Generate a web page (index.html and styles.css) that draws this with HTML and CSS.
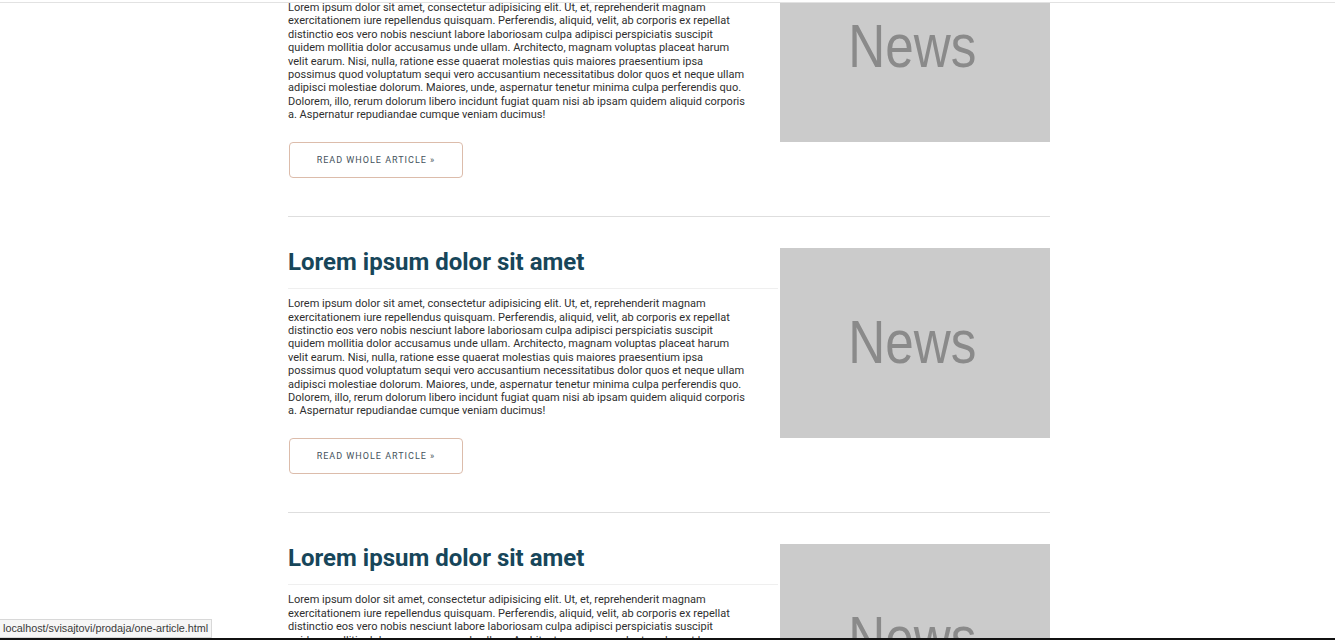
FILE: index.html
```html
<!DOCTYPE html>
<html lang="en">
<head>
<meta charset="utf-8">
<title>News</title>
<link rel="stylesheet" href="styles.css">
</head>
<body>
<div class="top-line"></div>
<main class="news-list">
  <article class="article first">
    <div class="article-body">
      <h2 class="article-title">Lorem ipsum dolor sit amet</h2>
      <p class="article-text">Lorem ipsum dolor sit amet, consectetur adipisicing elit. Ut, et, reprehenderit magnam exercitationem iure repellendus quisquam. Perferendis, aliquid, velit, ab corporis ex repellat distinctio eos vero nobis nesciunt labore laboriosam culpa adipisci perspiciatis suscipit quidem mollitia dolor accusamus unde ullam. Architecto, magnam voluptas placeat harum velit earum. Nisi, nulla, ratione esse quaerat molestias quis maiores praesentium ipsa possimus quod voluptatum sequi vero accusantium necessitatibus dolor quos et neque ullam adipisci molestiae dolorum. Maiores, unde, aspernatur tenetur minima culpa perferendis quo. Dolorem, illo, rerum dolorum libero incidunt fugiat quam nisi ab ipsam quidem aliquid corporis a. Aspernatur repudiandae cumque veniam ducimus!</p>
      <a class="read-more" href="one-article.html">Read whole article »</a>
    </div>
    <div class="article-image"><span>News</span></div>
  </article>
  <article class="article">
    <div class="article-body">
      <h2 class="article-title">Lorem ipsum dolor sit amet</h2>
      <p class="article-text">Lorem ipsum dolor sit amet, consectetur adipisicing elit. Ut, et, reprehenderit magnam exercitationem iure repellendus quisquam. Perferendis, aliquid, velit, ab corporis ex repellat distinctio eos vero nobis nesciunt labore laboriosam culpa adipisci perspiciatis suscipit quidem mollitia dolor accusamus unde ullam. Architecto, magnam voluptas placeat harum velit earum. Nisi, nulla, ratione esse quaerat molestias quis maiores praesentium ipsa possimus quod voluptatum sequi vero accusantium necessitatibus dolor quos et neque ullam adipisci molestiae dolorum. Maiores, unde, aspernatur tenetur minima culpa perferendis quo. Dolorem, illo, rerum dolorum libero incidunt fugiat quam nisi ab ipsam quidem aliquid corporis a. Aspernatur repudiandae cumque veniam ducimus!</p>
      <a class="read-more" href="one-article.html">Read whole article »</a>
    </div>
    <div class="article-image"><span>News</span></div>
  </article>
  <article class="article">
    <div class="article-body">
      <h2 class="article-title">Lorem ipsum dolor sit amet</h2>
      <p class="article-text">Lorem ipsum dolor sit amet, consectetur adipisicing elit. Ut, et, reprehenderit magnam exercitationem iure repellendus quisquam. Perferendis, aliquid, velit, ab corporis ex repellat distinctio eos vero nobis nesciunt labore laboriosam culpa adipisci perspiciatis suscipit quidem mollitia dolor accusamus unde ullam. Architecto, magnam voluptas placeat harum velit earum. Nisi, nulla, ratione esse quaerat molestias quis maiores praesentium ipsa possimus quod voluptatum sequi vero accusantium necessitatibus dolor quos et neque ullam adipisci molestiae dolorum. Maiores, unde, aspernatur tenetur minima culpa perferendis quo. Dolorem, illo, rerum dolorum libero incidunt fugiat quam nisi ab ipsam quidem aliquid corporis a. Aspernatur repudiandae cumque veniam ducimus!</p>
      <a class="read-more" href="one-article.html">Read whole article »</a>
    </div>
    <div class="article-image"><span>News</span></div>
  </article>
</main>
<div class="status-url">localhost/svisajtovi/prodaja/one-article.html</div>
<div class="bottom-edge"></div>
</body>
</html>
```

FILE: styles.css
```css
html, body {
  margin: 0;
  padding: 0;
  background: #ffffff;
  overflow: hidden;
  height: 640px;
}

body {
  font-family: Roboto, "Liberation Sans", Arial, sans-serif;
  color: #333333;
}

.top-line {
  position: fixed;
  top: 0;
  left: 0;
  right: 0;
  height: 2px;
  border-bottom: 1px solid #e2e2e2;
  background: #ffffff;
  z-index: 5;
}

.news-list {
  width: 762px;
  margin-left: 288px;
}

.article {
  display: grid;
  grid-template-columns: 1fr 270px;
  column-gap: 2px;
  padding: 31px 0 38px;
  border-bottom: 1px solid #dedede;
}

.article.first {
  margin-top: -79px;
}

.article-body {
  min-width: 0;
}

.article-title {
  margin: 0;
  padding: 0 0 12px;
  font-size: 24px;
  line-height: 28px;
  font-weight: 700;
  color: #17465a;
  border-bottom: 1px solid #efefef;
}

.article-text {
  margin: 8px 0 0;
  padding-right: 28px;
  font-size: 11px;
  line-height: 13.4px;
  color: #2f2f2f;
}

.read-more {
  display: inline-block;
  box-sizing: border-box;
  width: 174px;
  height: 36px;
  margin-top: 20.5px;
  margin-left: 1px;
  border: 1.5px solid #dcbcab;
  border-radius: 4px;
  font-size: 9px;
  line-height: 35px;
  letter-spacing: 1px;
  text-align: center;
  text-transform: uppercase;
  text-decoration: none;
  color: #44525b;
}

.article-image {
  height: 190px;
  box-sizing: border-box;
  padding-right: 5px;
  background: #cbcbcb;
  display: flex;
  justify-content: center;
  align-items: flex-start;
  overflow: hidden;
}

.article-image span {
  display: block;
  margin-top: 59px;
  font-family: "Liberation Sans", Arial, sans-serif;
  font-size: 61px;
  line-height: 70px;
  color: #8a8a8a;
  transform: scaleX(0.84);
}

.status-url {
  position: fixed;
  left: 0;
  bottom: 2px;
  height: 17px;
  padding: 0 3px;
  background: #f6f6f6;
  border: 1px solid #d8d8d8;
  border-left: none;
  font-family: "Liberation Sans", Arial, sans-serif;
  font-size: 10.8px;
  line-height: 17px;
  color: #3a3a3a;
  z-index: 5;
}

.bottom-edge {
  position: fixed;
  left: 0;
  right: 0;
  bottom: 0;
  height: 2px;
  background: #111111;
  z-index: 6;
}
```
